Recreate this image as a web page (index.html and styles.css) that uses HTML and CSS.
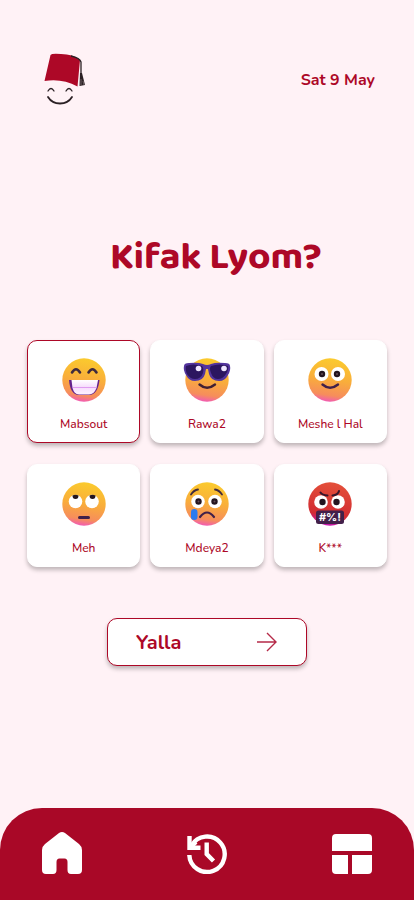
FILE: index.html
```html
<!DOCTYPE html>
<html lang="en">
<head>
    <meta charset="UTF-8">
    <meta name="viewport" content="width=device-width, initial-scale=1.0">
    <title>Kifak Lyom?</title>
    <link rel="stylesheet" href="styles.css">
</head>
<body>
    <header class="top-bar">
        <svg class="logo" viewBox="0 0 42 54" role="img" aria-label="Tarboush smiley">
            <path d="M6.500 2Q8 0 17 1Q29 1 36 7L33.500 33.500Q18 25 .5 28Z" fill="#ad0827"/>
            <path d="M27 3Q36 5 37 9V21" fill="none" stroke="#2b2024" stroke-width="1.3"/>
            <path d="M36 20H38L41 32L35.500 33Z" fill="#2b2024"/>
            <path d="M37 26V32M39 28L40 32" stroke="#8b7c80" stroke-width=".7"/>
            <path d="M4 38Q7 33 10 38M22 38Q25 33 28 38" fill="none" stroke="#2b2024" stroke-width="1.3" stroke-linecap="round"/>
            <path d="M4 44Q8 50.500 16 50.500Q24 50.500 28 44" fill="none" stroke="#2b2024" stroke-width="1.8" stroke-linecap="round"/>
        </svg>
        <time class="date">Sat 9 May</time>
    </header>

    <main>
        <form class="mood-form">
            <h1 class="title" id="question">Kifak Lyom?</h1>

            <div class="moods" role="radiogroup" aria-labelledby="question">
                <label class="mood">
                    <input type="radio" name="mood" value="mabsout" checked>
                    <svg class="emoji" viewBox="0 0 48 46" aria-hidden="true">
                        <defs>
                            <linearGradient id="yellow" x1=".6" y1="0" x2=".45" y2="1">
                                <stop offset="0" stop-color="#fbcb2d"/>
                                <stop offset=".5" stop-color="#f9ad3b"/>
                                <stop offset=".85" stop-color="#f68d5c"/>
                                <stop offset="1" stop-color="#f25bb4"/>
                            </linearGradient>
                            <linearGradient id="red" x1=".6" y1="0" x2=".45" y2="1">
                                <stop offset="0" stop-color="#e4503a"/>
                                <stop offset=".75" stop-color="#d22c32"/>
                                <stop offset="1" stop-color="#c414b4"/>
                            </linearGradient>
                            <linearGradient id="teeth" x1="0" y1="0" x2="0" y2="1">
                                <stop offset="0" stop-color="#ffffff"/>
                                <stop offset=".5" stop-color="#f6dcfc"/>
                                <stop offset="1" stop-color="#fff2ff"/>
                            </linearGradient>
                        </defs>
                        <circle cx="24" cy="23" r="21.7" fill="url(#yellow)"/>
                        <path d="M12 15.500Q16 9 20 15.500M28.500 15.500Q32.500 9 36.500 15.500" fill="none" stroke="#402a3e" stroke-width="2.6" stroke-linecap="round"/>
                        <path d="M9 23H39.5Q38 37.5 29 38H19Q10 37.5 9 23Z" fill="#64228c"/>
                        <path d="M11.500 23H38L36.500 31Q34 37.5 29 37.5H19Q14 37 12.500 31Z" fill="url(#teeth)"/>
                        <path d="M13 30.500H36" stroke="#df9cf0" stroke-width="1"/>
                    </svg>
                    <span>Mabsout</span>
                </label>

                <label class="mood">
                    <input type="radio" name="mood" value="rawa2">
                    <svg class="emoji" viewBox="0 0 48 46" aria-hidden="true">
                        <circle cx="24" cy="23" r="21.7" fill="url(#yellow)"/>
                        <path d="M1 9Q1 6 6 6Q15 5 20 7Q24 9 28 7Q33 5 42 6Q47 6 47 9Q48 13 45 18Q42 24 36 24Q28 24 26 17L25 12H23L22 17Q20 24 12 24Q6 24 3 18Q0 13 1 9Z" fill="#53349d"/>
                        <path d="M3 9Q10 6 19 9Q21 11 20 16Q18 22 12 22Q7 22 4 17Q2 12 3 9ZM28 9Q37 6 45 9Q46 12 43 17Q40 22 35 22Q30 22 28 16Q26 11 28 9Z" fill="#2c1660"/>
                        <circle cx="15.500" cy="11.500" r="2.800" fill="#efe6ff"/>
                        <circle cx="41" cy="11.500" r="2.800" fill="#efe6ff"/>
                        <path d="M16.500 27.500Q24 34 32 27.500" fill="none" stroke="#402033" stroke-width="2.4" stroke-linecap="round"/>
                    </svg>
                    <span>Rawa2</span>
                </label>

                <label class="mood">
                    <input type="radio" name="mood" value="meshe">
                    <svg class="emoji" viewBox="0 0 48 46" aria-hidden="true">
                        <circle cx="24" cy="23" r="21.7" fill="url(#yellow)"/>
                        <circle cx="15.500" cy="17" r="7" fill="#fff"/>
                        <circle cx="32" cy="17" r="7" fill="#fff"/>
                        <circle cx="16" cy="17" r="3.2" fill="#24151f"/>
                        <circle cx="31" cy="17" r="3.2" fill="#24151f"/>
                        <circle cx="16" cy="17" r="1" fill="#604a56"/>
                        <circle cx="31" cy="17" r="1" fill="#604a56"/>
                        <path d="M16.500 27.500Q24 34 32 27.500" fill="none" stroke="#40204a" stroke-width="2.4" stroke-linecap="round"/>
                    </svg>
                    <span>Meshe l Hal</span>
                </label>

                <label class="mood">
                    <input type="radio" name="mood" value="meh">
                    <svg class="emoji" viewBox="0 0 48 46" aria-hidden="true">
                        <circle cx="24" cy="23" r="21.7" fill="url(#yellow)"/>
                        <circle cx="15.500" cy="20.500" r="6.800" fill="#fff"/>
                        <circle cx="32" cy="20.500" r="6.800" fill="#fff"/>
                        <path d="M12.500 14.500Q15.500 13 18.500 14.500Q18.500 18 15.500 18Q12.500 18 12.500 14.500ZM29.500 14.500Q32.500 13 35.500 14.500Q35.500 18 32.500 18Q29.500 18 29.500 14.500Z" fill="#24151f"/>
                        <rect x="18" y="35" width="12" height="3" rx="1.500" fill="#40204a"/>
                    </svg>
                    <span>Meh</span>
                </label>

                <label class="mood">
                    <input type="radio" name="mood" value="mdeya2">
                    <svg class="emoji" viewBox="0 0 48 46" aria-hidden="true">
                        <circle cx="24" cy="23" r="21.7" fill="url(#yellow)"/>
                        <path d="M8 13.500Q11 9 15 8.500M32 8.500Q36 9 39 13.500" fill="none" stroke="#402a3e" stroke-width="1.800" stroke-linecap="round"/>
                        <circle cx="15" cy="20.500" r="6.800" fill="#fff"/>
                        <circle cx="32" cy="20.500" r="6.800" fill="#fff"/>
                        <circle cx="15.500" cy="20.500" r="3.200" fill="#24151f"/>
                        <circle cx="31.500" cy="20.500" r="3.200" fill="#24151f"/>
                        <circle cx="15.500" cy="20.500" r="1" fill="#604a56"/>
                        <circle cx="31.500" cy="20.500" r="1" fill="#604a56"/>
                        <rect x="8" y="28" width="6.500" height="11" rx="3.200" fill="#2d7bf0"/>
                        <path d="M17 36Q24 27 31 36" fill="none" stroke="#40204a" stroke-width="2.200" stroke-linecap="round"/>
                    </svg>
                    <span>Mdeya2</span>
                </label>

                <label class="mood">
                    <input type="radio" name="mood" value="k">
                    <svg class="emoji" viewBox="0 0 48 46" aria-hidden="true">
                        <circle cx="24" cy="23" r="21.7" fill="url(#red)"/>
                        <circle cx="15" cy="21" r="6.800" fill="#fff"/>
                        <circle cx="32" cy="21" r="6.800" fill="#fff"/>
                        <circle cx="16.500" cy="21" r="3.200" fill="#24151f"/>
                        <circle cx="30.500" cy="21" r="3.200" fill="#24151f"/>
                        <path d="M14.500 11.500Q16 14 21.500 14.500M26.500 14.500Q32 14 33 10" fill="none" stroke="#35162c" stroke-width="2" stroke-linecap="round"/>
                        <rect x="10" y="29.500" width="28" height="13.500" rx="2.500" fill="#43204a"/>
                        <text class="swear" x="24" y="40" text-anchor="middle">#%!</text>
                    </svg>
                    <span>K***</span>
                </label>
            </div>

            <button type="submit" class="submit">
                Yalla
                <svg viewBox="0 0 22 22" aria-hidden="true">
                    <path d="M1 11H20M11 2L20 11L11 20" fill="none" stroke="#b52a48" stroke-width="1.400"/>
                </svg>
            </button>
        </form>
    </main>

    <nav class="bottom-nav">
        <a href="#home" aria-label="Home">
            <svg viewBox="0 0 40 42">
                <path d="M17 1Q20 -1 23 1L37 12Q40 14.500 40 18V38Q40 42 36 42H29Q25.500 42 25.500 38V30Q25.500 26.500 22.500 26.500H17.500Q14.500 26.500 14.500 30V38Q14.500 42 11 42H4Q0 42 0 38V18Q0 14.500 3 12Z" fill="#fff"/>
            </svg>
        </a>
        <a href="#history" aria-label="History">
            <svg viewBox="0 0 40 42">
                <path d="M4.600 13.500A17.700 17.700 0 1 1 2.300 23" fill="none" stroke="#fff" stroke-width="4.400"/>
                <path d="M2.500 4V15.800H13.500" fill="none" stroke="#fff" stroke-width="4.400"/>
                <path d="M3 16L9 10" stroke="#fff" stroke-width="4"/>
                <path d="M19.700 10.500V22L26.500 29" fill="none" stroke="#fff" stroke-width="4.400"/>
            </svg>
        </a>
        <a href="#dashboard" aria-label="Dashboard">
            <svg viewBox="0 0 40 42">
                <path d="M4 2H36Q40 2 40 6V19H0V6Q0 2 4 2ZM0 23H16V42H4Q0 42 0 38ZM20 23H40V38Q40 42 36 42H20Z" fill="#fff"/>
            </svg>
        </a>
    </nav>
</body>
</html>
```
FILE: styles.css
```css
* {
    box-sizing: border-box;
}

body {
    display: flex;
    flex-direction: column;
    min-height: 100vh;
    margin: 0;
    background-color: #fff2f6;
    color: #ad0827;
    font-family: 'Nunito', 'Lato', sans-serif;
}

.top-bar {
    display: flex;
    justify-content: space-between;
    align-items: center;
    padding: 53px 39px 0 44px;
}

.logo {
    width: 42px;
    height: 54px;
}

.date {
    font-size: 16px;
    font-weight: bold;
}

.mood-form {
    display: flex;
    flex-direction: column;
    align-items: center;
    padding: 130px 27px 40px;
}

.title {
    margin: 0;
    padding-left: 18px;
    font-family: 'Baloo 2', 'Open Sans', sans-serif;
    font-size: 39px;
    font-weight: bold;
    line-height: 40px;
}

.moods {
    display: grid;
    grid-template-columns: repeat(3, 1fr);
    gap: 21px 10px;
    width: 100%;
    margin-top: 63px;
}

.mood {
    display: flex;
    flex-direction: column;
    align-items: center;
    gap: 12px;
    padding: 16px 0 8px;
    border: 1px solid #fff;
    border-radius: 10px;
    background-color: #fff;
    box-shadow: 0 3px 4px rgba(0, 0, 0, 0.25);
    font-size: 12px;
    font-weight: 500;
    line-height: 19px;
    cursor: pointer;
}

.mood:has(input:checked) {
    border-color: #ad0827;
}

.mood:has(input:focus-visible) {
    outline: 2px solid #ad0827;
}

.mood input {
    position: absolute;
    opacity: 0;
    pointer-events: none;
}

.emoji {
    width: 48px;
    height: 46px;
}

.swear {
    fill: #fff;
    font-family: 'Inter', sans-serif;
    font-size: 11px;
    font-weight: bold;
}

.submit {
    display: flex;
    justify-content: space-between;
    align-items: center;
    width: 200px;
    height: 48px;
    margin-top: 51px;
    padding: 0 28px;
    border: 1px solid #ad0827;
    border-radius: 10px;
    background-color: #fff;
    box-shadow: 0 3px 4px rgba(0, 0, 0, 0.25);
    color: #ad0827;
    font-family: inherit;
    font-size: 20px;
    font-weight: bold;
    cursor: pointer;
}

.submit svg {
    width: 22px;
    height: 22px;
}

.bottom-nav {
    display: flex;
    justify-content: space-between;
    margin-top: auto;
    padding: 24px 42px 26px;
    border-radius: 42px 42px 0 0;
    background-color: #a90827;
}

.bottom-nav svg {
    display: block;
    width: 40px;
    height: 42px;
}
```
